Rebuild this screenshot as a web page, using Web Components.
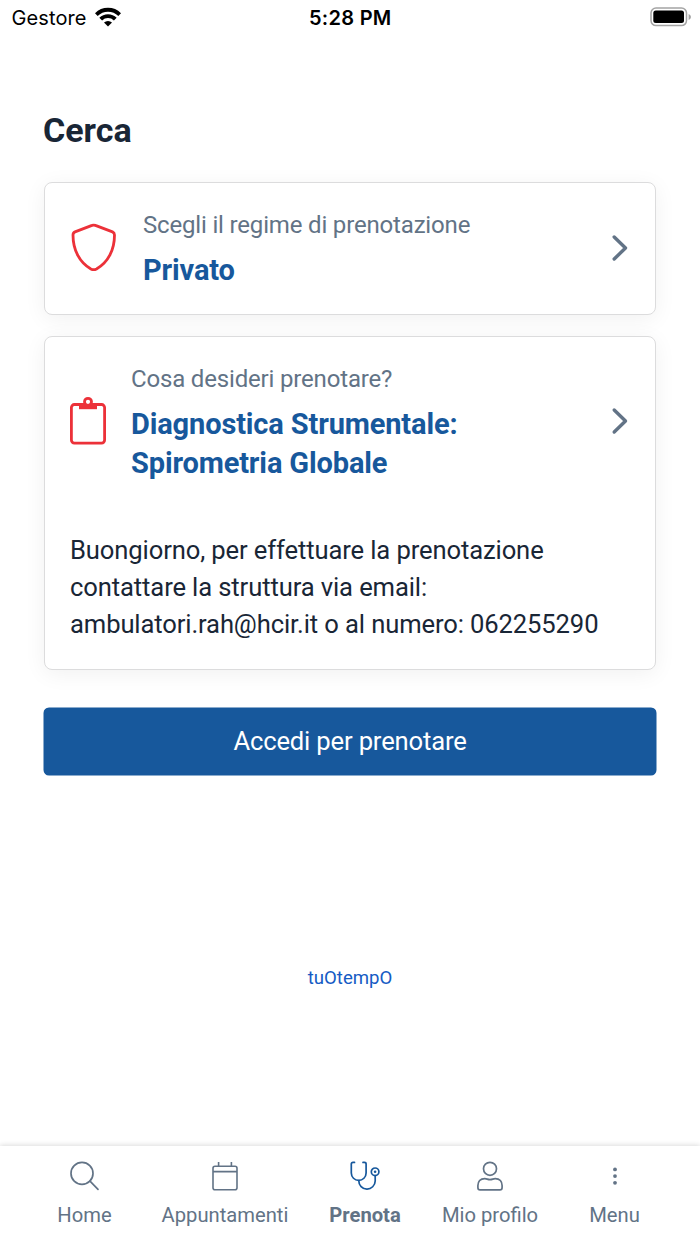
<!DOCTYPE html>
<html lang="it">
<head>
<meta charset="utf-8">
<title>Prenota</title>
<style>
  :root {
    --text: #192636;
    --muted: #627386;
    --blue: #17589c;
    --red: #ec3139;
    --border: #dcdcdd;
  }
  * {
    box-sizing: border-box;
  }
  body {
    background: #fff;
    color: var(--text);
    font-family: Roboto, "Liberation Sans", sans-serif;
    margin: 0;
  }
</style>
</head>
<body>
<booking-app></booking-app>

<script>
const icons = {
  shield: `<svg width="48" height="50" viewBox="0 0 48 50" fill="none" stroke="currentColor" stroke-width="2.8" stroke-linejoin="round">
    <path d="M22 2.400Q23.700 1.700 25.400 2.400L42.500 8.900Q44.500 9.800 44.500 12C44.500 27 38 39.500 26.500 46Q23.700 47.400 20.900 46C9.500 39.500 3 27 3 12Q3 9.800 5 8.900Z"/></svg>`,
  clipboard: `<svg width="36" height="50" viewBox="0 0 36 50" fill="none" stroke="currentColor" stroke-width="2.8">
    <rect x="1.400" y="8.500" width="33.200" height="38.600" rx="3"/>
    <path d="M9 8H27V13.200H9Z" fill="currentColor" stroke="none"/>
    <circle cx="18" cy="5.800" r="3.500" fill="#fff"/></svg>`,
  chevron: `<svg width="18" height="28" viewBox="0 0 18 28" fill="none" stroke="currentColor" stroke-width="3.400" stroke-linecap="round" stroke-linejoin="round">
    <path d="M3.200 3L14.500 14L3.200 25"/></svg>`,
  search: `<svg width="30" height="30" viewBox="0 0 30 30" fill="none" stroke="currentColor" stroke-width="1.700" stroke-linecap="round">
    <circle cx="12" cy="12.400" r="11"/><path d="M20 20.200L28 28.400"/></svg>`,
  calendar: `<svg width="30" height="30" viewBox="0 0 30 30" fill="none" stroke="currentColor" stroke-width="1.600">
    <rect x="3" y="5.200" width="24" height="23.600" rx="2"/><path d="M3 10.600H27M8.600 1V5M21.400 1V5"/></svg>`,
  stethoscope: `<svg width="30" height="30" viewBox="0 0 30 30" fill="none" stroke="currentColor" stroke-width="1.700" stroke-linecap="round">
    <path d="M4.500 1.400H3Q1.300 1.400 1.300 3V12A7.400 7.400 0 0 0 16.100 12V3Q16.100 1.400 14.400 1.400H13"/>
    <path d="M8.800 19.700A8.200 8.200 0 0 0 25.200 20V14.500"/>
    <circle cx="25.100" cy="10.800" r="3.800"/><circle cx="25.100" cy="10.800" r="1.300" fill="currentColor" stroke="none"/></svg>`,
  user: `<svg width="30" height="30" viewBox="0 0 30 30" fill="none" stroke="currentColor" stroke-width="1.700" stroke-linejoin="round">
    <circle cx="15" cy="7.800" r="6.500"/>
    <path d="M9.800 17.600C12 17.600 12.500 18.600 15 18.600S18 17.600 20.200 17.600C24.800 17.600 27.100 20.700 27.100 24.500V26.500Q27.100 28.900 25 28.900H5Q2.900 28.900 2.900 26.500V24.500C2.900 20.700 5.200 17.600 9.800 17.600Z"/></svg>`,
  dots: `<svg width="30" height="30" viewBox="0 0 30 30" fill="currentColor">
    <circle cx="15" cy="8.400" r="1.900"/><circle cx="15" cy="15.100" r="1.900"/><circle cx="15" cy="21.800" r="1.900"/></svg>`,
  wifi: `<svg width="26" height="20" viewBox="0 0 26 20" fill="none" stroke="currentColor" stroke-width="3.900">
    <path d="M1.300 7.600A16.600 16.600 0 0 1 24.700 7.600M5.700 12.200A10.300 10.300 0 0 1 20.300 12.200"/>
    <path d="M9 15.500A6 6 0 0 1 17 15.500L13 19.400Z" fill="currentColor" stroke="none"/></svg>`,
  battery: `<svg width="42" height="20" viewBox="0 0 42 20">
    <rect x="1" y="1" width="35.500" height="17.600" rx="5" fill="none" stroke="#a4a4a4" stroke-width="1.500"/>
    <rect x="3.300" y="3.600" width="30.700" height="12.400" rx="2.500"/>
    <path d="M38.600 7Q41 8 41 10T38.600 13Z" fill="#a4a4a4"/></svg>`
};

class AppIcon extends HTMLElement {
  connectedCallback() {
    const shadowRoot = this.attachShadow({ mode: "open" });
    shadowRoot.innerHTML = `
    <style>
    :host {
      display: block;
      flex: none;
    }
    svg {
      display: block;
    }
    </style>
    ${icons[this.getAttribute("name")]}
  `;
  }
}

class StatusBar extends HTMLElement {
  connectedCallback() {
    const shadowRoot = this.attachShadow({ mode: "open" });
    shadowRoot.innerHTML = `
    <style>
    :host {
      align-items: center;
      box-sizing: border-box;
      color: #000;
      display: grid;
      font-family: Inter, sans-serif;
      font-size: 20px;
      grid-template-columns: 1fr auto 1fr;
      height: 36px;
      padding: 0 8px 0 11.5px;
    }
    .carrier {
      align-items: center;
      display: flex;
      gap: 8px;
      letter-spacing: 0.1px;
    }
    .carrier app-icon {
      margin-top: -3px;
    }
    .time {
      font-weight: 600;
      letter-spacing: 0.3px;
      margin-left: -3px;
    }
    .battery {
      justify-self: end;
      margin-top: -2px;
    }
    </style>
    <div class="carrier"><span>Gestore</span><app-icon name="wifi"></app-icon></div>
    <div class="time">5:28 PM</div>
    <app-icon class="battery" name="battery"></app-icon>
  `;
  }
}

class OptionCard extends HTMLElement {
  connectedCallback() {
    const shadowRoot = this.attachShadow({ mode: "open" });
    shadowRoot.innerHTML = `
    <style>
    :host {
      background: #fff;
      border: 1.5px solid var(--border);
      border-radius: 8px;
      box-shadow: 0 4px 22px rgba(0, 0, 0, 0.06);
      box-sizing: border-box;
      display: block;
      padding: 24px 25px 0;
    }
    .card__row {
      align-items: center;
      display: flex;
    }
    .card__icon {
      color: var(--red);
      margin-top: -2px;
    }
    .card__body {
      flex: 1;
      margin-left: 25px;
    }
    .card__label {
      color: var(--muted);
      font-size: 24px;
      letter-spacing: -0.17px;
      line-height: 36px;
    }
    .card__value {
      color: var(--blue);
      font-size: 29px;
      font-weight: 700;
      letter-spacing: -0.14px;
      line-height: 39px;
      margin-top: 8px;
    }
    .card__chevron {
      color: var(--muted);
      margin: -2px 1px 0 0;
    }
    </style>
    <div class="card__row">
      <app-icon class="card__icon" name="${this.getAttribute("icon")}"></app-icon>
      <div class="card__body">
        <div class="card__label">${this.getAttribute("label")}</div>
        <div class="card__value"><slot name="value"></slot></div>
      </div>
      <app-icon class="card__chevron" name="chevron"></app-icon>
    </div>
    <slot></slot>
  `;
  }
}

class PrimaryButton extends HTMLElement {
  connectedCallback() {
    const shadowRoot = this.attachShadow({ mode: "open" });
    shadowRoot.innerHTML = `
    <style>
    :host {
      display: block;
    }
    button {
      background: var(--blue);
      border: 0;
      border-radius: 5px;
      box-shadow: 0 0 0 0.5px var(--blue);
      color: #fff;
      display: block;
      font: 400 25.6px/37px Roboto, sans-serif;
      height: 67px;
      letter-spacing: -0.16px;
      padding: 0;
      width: 100%;
    }
    </style>
    <button type="button"><slot></slot></button>
  `;
  }
}

class TabItem extends HTMLElement {
  connectedCallback() {
    const shadowRoot = this.attachShadow({ mode: "open" });
    shadowRoot.innerHTML = `
    <style>
    :host {
      align-items: center;
      color: var(--muted);
      display: flex;
      flex-direction: column;
      font-size: 20.2px;
      gap: 11px;
      line-height: 26px;
      white-space: nowrap;
    }
    :host([active]) {
      font-weight: 700;
    }
    :host([active]) app-icon {
      color: var(--blue);
    }
    </style>
    <app-icon name="${this.getAttribute("icon")}"></app-icon>
    <span><slot></slot></span>
  `;
  }
}

class TabBar extends HTMLElement {
  connectedCallback() {
    const shadowRoot = this.attachShadow({ mode: "open" });
    shadowRoot.innerHTML = `
    <style>
    :host {
      background: #fff;
      box-shadow: 0 -1px 5px rgba(0, 0, 0, 0.14);
      box-sizing: border-box;
      display: grid;
      grid-template-columns: 135px 146px 134px 116px 133px;
      height: 98px;
      padding: 15px 0 0 17px;
    }
    </style>
    <slot></slot>
  `;
  }
}

class BookingApp extends HTMLElement {
  connectedCallback() {
    const shadowRoot = this.attachShadow({ mode: "open" });
    shadowRoot.innerHTML = `
    <style>
    :host {
      display: flex;
      flex-direction: column;
      height: 1244px;
      width: 700px;
    }
    main {
      flex: 1;
      padding: 74px 44px 0;
    }
    h1 {
      font-size: 34px;
      font-weight: 700;
      line-height: 40px;
      margin: 0 0 32px -1px;
    }
    .regime {
      height: 133px;
      margin-bottom: 21px;
    }
    .service {
      height: 334px;
      margin-bottom: 38px;
    }
    p {
      font-size: 25.6px;
      letter-spacing: -0.12px;
      line-height: 37px;
      margin: 49px 0 0;
      white-space: nowrap;
    }
    .brand {
      color: #155bc4;
      font-size: 18.6px;
      line-height: 24px;
      margin-top: 191px;
      text-align: center;
    }
    </style>
    <status-bar></status-bar>
    <main>
      <h1>Cerca</h1>
      <option-card class="regime" icon="shield" label="Scegli il regime di prenotazione">
        <span slot="value">Privato</span>
      </option-card>
      <option-card class="service" icon="clipboard" label="Cosa desideri prenotare?">
        <span slot="value">Diagnostica Strumentale:<br>Spirometria Globale</span>
        <p>Buongiorno, per effettuare la prenotazione<br>contattare la struttura via email:<br>ambulatori.rah@hcir.it o al numero: 062255290</p>
      </option-card>
      <primary-button>Accedi per prenotare</primary-button>
      <div class="brand">tuOtempO</div>
    </main>
    <tab-bar>
      <tab-item icon="search">Home</tab-item>
      <tab-item icon="calendar">Appuntamenti</tab-item>
      <tab-item icon="stethoscope" active>Prenota</tab-item>
      <tab-item icon="user">Mio profilo</tab-item>
      <tab-item icon="dots">Menu</tab-item>
    </tab-bar>
  `;
  }
}

window.customElements.define("app-icon", AppIcon);
window.customElements.define("status-bar", StatusBar);
window.customElements.define("option-card", OptionCard);
window.customElements.define("primary-button", PrimaryButton);
window.customElements.define("tab-item", TabItem);
window.customElements.define("tab-bar", TabBar);
window.customElements.define("booking-app", BookingApp);
</script>
</body>
</html>
